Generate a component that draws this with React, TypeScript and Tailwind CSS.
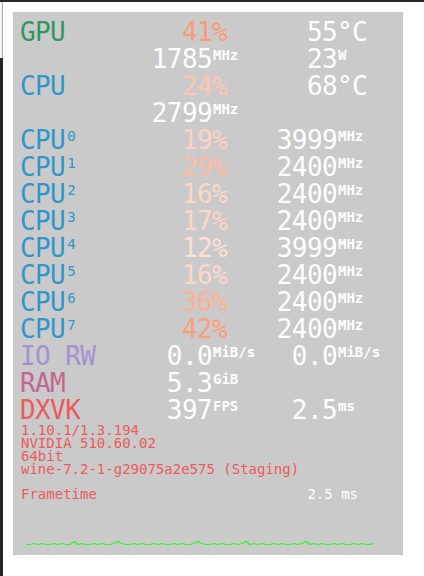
type Row = {
  label?: string;
  labelColor?: string;
  sup?: string;
  v1?: string;
  v1Color?: string;
  u1?: string;
  u1Big?: boolean;
  v2?: string;
  u2?: string;
  u2Big?: boolean;
};

const rows: Row[] = [
  { label: "GPU", labelColor: "text-[#2e9762]", v1: "41", v1Color: "text-[#ff9a78]", u1: "%", u1Big: true, v2: "55", u2: "°C", u2Big: true },
  { v1: "1785", u1: "MHz", v2: "23", u2: "W" },
  { label: "CPU", labelColor: "text-[#2e97cb]", v1: "24", v1Color: "text-[#ffc6b2]", u1: "%", u1Big: true, v2: "68", u2: "°C", u2Big: true },
  { v1: "2799", u1: "MHz" },
  { label: "CPU", sup: "0", labelColor: "text-[#2e97cb]", v1: "19", v1Color: "text-[#ffd1c2]", u1: "%", u1Big: true, v2: "3999", u2: "MHz" },
  { label: "CPU", sup: "1", labelColor: "text-[#2e97cb]", v1: "29", v1Color: "text-[#ffbba3]", u1: "%", u1Big: true, v2: "2400", u2: "MHz" },
  { label: "CPU", sup: "2", labelColor: "text-[#2e97cb]", v1: "16", v1Color: "text-[#ffd7ca]", u1: "%", u1Big: true, v2: "2400", u2: "MHz" },
  { label: "CPU", sup: "3", labelColor: "text-[#2e97cb]", v1: "17", v1Color: "text-[#ffd5c7]", u1: "%", u1Big: true, v2: "2400", u2: "MHz" },
  { label: "CPU", sup: "4", labelColor: "text-[#2e97cb]", v1: "12", v1Color: "text-[#ffe0d6]", u1: "%", u1Big: true, v2: "3999", u2: "MHz" },
  { label: "CPU", sup: "5", labelColor: "text-[#2e97cb]", v1: "16", v1Color: "text-[#ffd7ca]", u1: "%", u1Big: true, v2: "2400", u2: "MHz" },
  { label: "CPU", sup: "6", labelColor: "text-[#2e97cb]", v1: "36", v1Color: "text-[#ffb092]", u1: "%", u1Big: true, v2: "2400", u2: "MHz" },
  { label: "CPU", sup: "7", labelColor: "text-[#2e97cb]", v1: "42", v1Color: "text-[#ff9d7a]", u1: "%", u1Big: true, v2: "2400", u2: "MHz" },
  { label: "IO RW", labelColor: "text-[#a491d3]", v1: "0.0", u1: "MiB/s", v2: "0.0", u2: "MiB/s" },
  { label: "RAM", labelColor: "text-[#c26693]", v1: "5.3", u1: "GiB" },
  { label: "DXVK", labelColor: "text-[#eb5b5b]", v1: "397", u1: "FPS", v2: "2.5", u2: "ms" },
];

function Unit({ text, big }: { text?: string; big?: boolean }) {
  if (!text) return null;
  if (big) return <span className="text-[26px] leading-[27px] tracking-[-0.6px]">{text}</span>;
  return <span className="text-[14px] leading-[14px] mt-[2px] ml-[1px] font-semibold">{text}</span>;
}

function StatRow({ r }: { r: Row }) {
  return (
    <div className="flex items-start h-[27px] text-white">
      <div className={`flex items-start w-[95px] ${r.labelColor ?? ""}`}>
        <span className="text-[26px] leading-[27px] tracking-[-0.6px] whitespace-pre">{r.label}</span>
        {r.sup && <span className="text-[14px] leading-[14px] mt-[2px] ml-[2px]">{r.sup}</span>}
      </div>
      <div className={`w-[97px] text-right text-[26px] leading-[27px] tracking-[-0.6px] ${r.v1Color ?? ""}`}>{r.v1}</div>
      <div className={`flex items-start w-[36px] ${r.v1Color && r.u1Big ? r.v1Color : ""}`}>
        <Unit text={r.u1} big={r.u1Big} />
      </div>
      <div className="w-[89px] text-right text-[26px] leading-[27px] tracking-[-0.6px]">{r.v2}</div>
      <div className="flex items-start">
        <Unit text={r.u2} big={r.u2Big} />
      </div>
    </div>
  );
}

function FrameGraph() {
  const spikes = [12, 23, 43, 55, 70];
  const pts = Array.from({ length: 88 }, (_, i) => {
    let d = i % 5 === 2 || i % 5 === 4 ? 1 : 0;
    if (spikes.includes(i)) d = 3;
    return `${i * 4},${5.5 - d}`;
  }).join(" ");
  return (
    <svg width="350" height="7" viewBox="0 0 350 7" className="block">
      <polyline points={pts} fill="none" stroke="#22ff22" strokeWidth="1.2" />
    </svg>
  );
}

export default function App() {
  return (
    <div className="flex flex-col w-[424px] h-[576px] bg-white overflow-hidden font-['DejaVu_Sans_Mono',monospace]">
      <div className="h-[2px] bg-[#262626]" />
      <div className="flex flex-1">
        <div className="flex flex-col w-[3px]">
          <div className="h-[56px] bg-[#f4f4f4] border-r border-[#a8a8a8]" />
          <div className="flex-1 bg-[#262626]" />
        </div>
        <div className="pl-[10px] pt-[10px]">
          <div className="flex flex-col w-[390px] h-[543px] bg-[#cacaca] pt-[7px] pl-[7px]">
            {rows.map((r, i) => (
              <StatRow key={i} r={r} />
            ))}
            <div className="pl-[1px] text-[14px] leading-[13px] text-[#eb5b5b] whitespace-pre">
              <div>1.10.1/1.3.194</div>
              <div>NVIDIA 510.60.02</div>
              <div>64bit</div>
              <div>wine-7.2-1-g29075a2e575 (Staging)</div>
            </div>
            <div className="flex justify-between w-[338px] mt-[12px] pl-[1px] text-[14px] leading-[13px]">
              <span className="text-[#eb5b5b]">Frametime</span>
              <span className="text-white">2.5 ms</span>
            </div>
            <div className="mt-[38px] ml-[6px]">
              <FrameGraph />
            </div>
          </div>
        </div>
      </div>
    </div>
  );
}
